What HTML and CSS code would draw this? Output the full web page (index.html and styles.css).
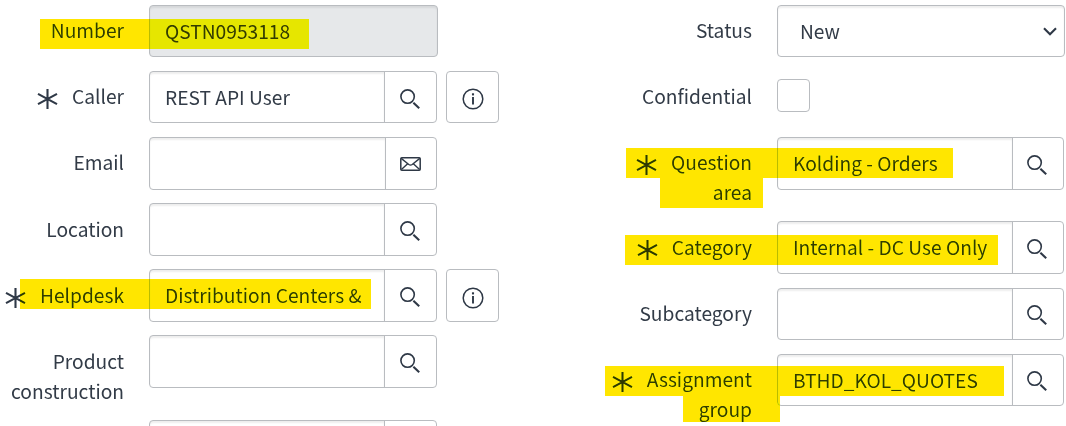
FILE: index.html
```html
<!DOCTYPE html>
<html lang="en">
<head>
  <meta charset="UTF-8">
  <meta name="viewport" content="width=device-width, initial-scale=1.0">
  <title>Question QSTN0953118</title>
  <link rel="stylesheet" href="styles.css">
</head>
<body>
  <svg class="sprite">
    <symbol id="star" viewBox="0 0 21 22">
      <path d="M10.5 1v20M1 5.8l19 10.4M20 5.8L1 16.2" stroke-width="2.1"/>
    </symbol>
    <symbol id="search" viewBox="0 0 20 20">
      <circle cx="7.6" cy="7.6" r="6.7" stroke-width="1.6"/>
      <path d="M13.4 13.7l5.8 5.5" stroke-width="2.1"/>
    </symbol>
    <symbol id="info" viewBox="0 0 22 22">
      <circle cx="11" cy="11" r="9.8" stroke-width="1.5"/>
      <path d="M11 9v7.4" stroke-width="1.9"/>
      <path d="M11 5.3v2.1" stroke-width="2.1"/>
    </symbol>
    <symbol id="mail" viewBox="0 0 21 14">
      <rect x=".8" y=".8" width="19.4" height="12.4" rx="1" stroke-width="1.5"/>
      <path d="M1.2 1.4l7.6 6.1q1.7 1.2 3.4 0l7.6-6.1M1.4 12.6l6-5.6M19.6 12.6l-6-5.6" stroke-width="1.4"/>
    </symbol>
    <symbol id="chevron" viewBox="0 0 14 9">
      <path d="M1 1.2l6 6 6-6" stroke-width="2.1"/>
    </symbol>
  </svg>

  <form class="record">
    <div class="column left">
      <div class="row">
        <label>Number</label>
        <div class="field readonly"><span class="value">QSTN0953118</span></div>
      </div>
      <div class="row">
        <label><svg class="star"><use href="#star"/></svg>Caller</label>
        <div class="field group">
          <span class="value">REST API User</span>
          <span class="addon"><svg class="search"><use href="#search"/></svg></span>
        </div>
        <div class="field info-btn"><svg class="info"><use href="#info"/></svg></div>
      </div>
      <div class="row">
        <label>Email</label>
        <div class="field group">
          <span class="value"></span>
          <span class="addon mail-btn"><svg class="mail"><use href="#mail"/></svg></span>
        </div>
      </div>
      <div class="row">
        <label>Location</label>
        <div class="field group">
          <span class="value"></span>
          <span class="addon"><svg class="search"><use href="#search"/></svg></span>
        </div>
      </div>
      <div class="row">
        <label><svg class="star"><use href="#star"/></svg>Helpdesk</label>
        <div class="field group">
          <span class="value">Distribution Centers &amp;</span>
          <span class="addon"><svg class="search"><use href="#search"/></svg></span>
        </div>
        <div class="field info-btn"><svg class="info"><use href="#info"/></svg></div>
      </div>
      <div class="row">
        <label>Product<br>construction</label>
        <div class="field group">
          <span class="value"></span>
          <span class="addon"><svg class="search"><use href="#search"/></svg></span>
        </div>
      </div>
      <div class="row">
        <label></label>
        <div class="field group">
          <span class="value"></span>
          <span class="addon"></span>
        </div>
      </div>
    </div>

    <div class="column right">
      <div class="row">
        <label>Status</label>
        <div class="field select"><span class="value">New</span><svg class="chevron"><use href="#chevron"/></svg></div>
      </div>
      <div class="row">
        <label>Confidential</label>
        <div class="checkbox"></div>
      </div>
      <div class="row">
        <label><svg class="star"><use href="#star"/></svg>Question<br>area</label>
        <div class="field group">
          <span class="value">Kolding - Orders</span>
          <span class="addon"><svg class="search"><use href="#search"/></svg></span>
        </div>
      </div>
      <div class="row">
        <label><svg class="star"><use href="#star"/></svg>Category</label>
        <div class="field group">
          <span class="value">Internal - DC Use Only</span>
          <span class="addon"><svg class="search"><use href="#search"/></svg></span>
        </div>
      </div>
      <div class="row">
        <label>Subcategory</label>
        <div class="field group">
          <span class="value"></span>
          <span class="addon"><svg class="search"><use href="#search"/></svg></span>
        </div>
      </div>
      <div class="row">
        <label><svg class="star"><use href="#star"/></svg>Assignment<br>group</label>
        <div class="field group">
          <span class="value">BTHD_KOL_QUOTES</span>
          <span class="addon"><svg class="search"><use href="#search"/></svg></span>
        </div>
      </div>
    </div>
  </form>

  <!-- marker strokes over the form -->
  <div class="marker number"></div>
  <div class="marker helpdesk"></div>
  <div class="marker question"></div>
  <div class="marker question-area"></div>
  <div class="marker category"></div>
  <div class="marker assignment"></div>
  <div class="marker assignment-group"></div>
</body>
</html>
```
FILE: styles.css
```css
* {
  box-sizing: border-box;
}

body {
  margin: 0;
  height: 426px;
  position: relative;
  overflow: hidden;
  background: #fff;
  color: #323b47;
  font-family: "Noto Sans CJK SC", "Open Sans", sans-serif;
  font-size: 19.2px;
  line-height: 30px;
}

.sprite {
  display: none;
}

svg {
  fill: none;
  stroke: #2e3846;
  flex-shrink: 0;
}

.record {
  display: flex;
  height: 426px;
  padding-top: 5px;
  overflow: hidden;
}

.column {
  display: flex;
  flex-direction: column;
  gap: 13.7px;
}

.left {
  width: 602px;
}

.right {
  width: 464px;
}

.row {
  display: flex;
  align-items: flex-start;
  min-height: 52.4px;
  flex-shrink: 0;
}

.row label {
  width: 124px;
  margin-right: 25px;
  padding: 10.3px 0 0.3px;
  text-align: right;
  white-space: nowrap;
  flex-shrink: 0;
}

.right .row label {
  width: 150px;
}

.star {
  width: 21px;
  height: 22px;
  margin-right: 14px;
  vertical-align: -6px;
}

.field {
  height: 52.4px;
  border: 1px solid #b9bcc0;
  border-radius: 4px;
  display: flex;
  align-items: center;
  background: #fff;
}

.value {
  flex: 1;
  height: 100%;
  padding: 10px 0 0 15px;
  white-space: nowrap;
}

.group .value,
.readonly,
.select {
  box-shadow: inset 0 2px 2px rgba(0, 0, 0, 0.07);
}

.group .value {
  border-radius: 3px 0 0 3px;
}

.group {
  width: 288px;
}

.right .group {
  width: 287px;
}

.addon {
  width: 52px;
  height: 100%;
  border-left: 1px solid #b9bcc0;
  display: flex;
  align-items: center;
  justify-content: center;
}

.right .addon {
  width: 51px;
}

.addon.mail-btn {
  width: 51px;
}

.readonly {
  width: 289px;
  background: #e6e8ea;
}

.select {
  width: 288px;
}

.select .value {
  padding-left: 22px;
}

.info-btn {
  width: 53px;
  margin-left: 9px;
  justify-content: center;
}

.search {
  width: 20px;
  height: 20px;
  margin: 3px 0 0 -2px;
}

.info {
  width: 22px;
  height: 22px;
  margin-top: 4px;
}

.mail {
  width: 21px;
  height: 14px;
  margin: 2px 0 0 -1px;
}

.chevron {
  width: 14px;
  height: 9px;
  margin-right: 7px;
}

.checkbox {
  width: 33px;
  height: 33px;
  margin-top: 8px;
  border: 1px solid #b9bcc0;
  border-radius: 4px;
}

.marker {
  position: absolute;
  height: 30px;
  background: #ffe600;
  mix-blend-mode: darken;
}

.number {
  left: 40px;
  top: 19px;
  width: 269px;
}

.helpdesk {
  left: 20px;
  top: 279px;
  width: 351px;
}

.question {
  left: 626px;
  top: 148px;
  width: 327px;
}

.question-area {
  left: 660px;
  top: 178px;
  width: 103px;
}

.category {
  left: 625px;
  top: 235px;
  width: 373px;
}

.assignment {
  left: 605px;
  top: 366px;
  width: 399px;
}

.assignment-group {
  left: 683px;
  top: 396px;
  width: 97px;
  height: 26px;
}
```
